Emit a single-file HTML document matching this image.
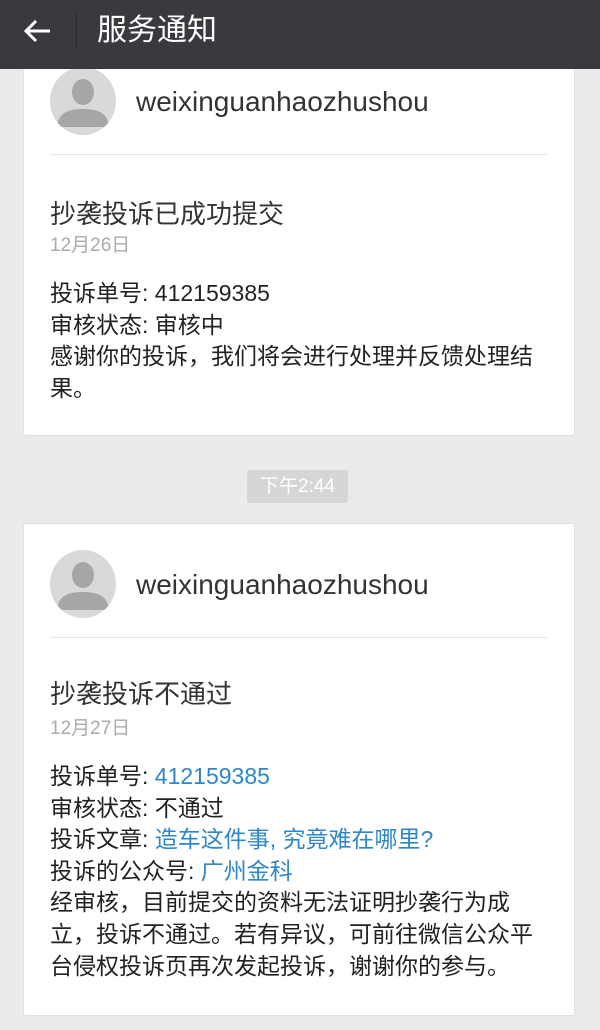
<!DOCTYPE html>
<html><head><meta charset="utf-8"><style>
*{margin:0;padding:0;box-sizing:border-box}
body{width:600px;height:1030px;background:#ebebeb;font-family:"Liberation Sans","Noto Sans CJK SC",sans-serif;position:relative;overflow:hidden;color:#222}
.hdr{position:absolute;left:0;top:0;width:600px;height:69px;background:#393a3e;z-index:5}
.hdr .t{position:absolute;left:97px;top:11px;font-size:30px;color:#fff;line-height:40px}
.hdr .sep{position:absolute;left:76px;top:12px;width:1px;height:38px;background:#2c2d30}
.card{position:absolute;left:23px;width:552px;background:#fff;border:1px solid #e0e0e0;border-radius:3px}
.av{position:absolute;left:26px;width:66px;height:68px;border-radius:50%;background:#d9d9d9;overflow:hidden}
.nm{position:absolute;left:112px;font-size:28px;color:#333;line-height:32px}
.dv{position:absolute;left:26px;width:497px;height:1px;background:#e6e6e6}
.ti{position:absolute;left:26px;font-size:26px;color:#333;line-height:32px}
.dt{position:absolute;left:26px;font-size:19px;color:#aaa;line-height:24px}
.bd{position:absolute;left:26px;font-size:23px;line-height:31.6px;color:#222;white-space:nowrap}
.bl{color:#2f86c8}
.pill{position:absolute;left:247px;top:470px;width:101px;height:33px;background:#d6d6d6;border-radius:3px;color:#fff;font-size:19px;text-align:center;line-height:33px}
</style></head><body>
<div class="hdr"><svg style="position:absolute;left:22px;top:18px" width="30" height="26" viewBox="0 0 30 26"><path d="M28 13H4M14 3L4 13l10 10" stroke="#fff" stroke-width="3" fill="none"/></svg><div class="sep"></div><div class="t">服务通知</div></div>

<div class="card" style="top:20px;height:416px">
<div class="av" style="top:46px"><svg width="66" height="68" viewBox="0 0 66 68"><ellipse cx="33" cy="25" rx="11" ry="13" fill="#a6a6a6"/><path d="M7 60C8 46 18 42 33 42s25 4 26 18z" fill="#a6a6a6"/></svg></div>
<div class="nm" style="top:65px">weixinguanhaozhushou</div>
<div class="dv" style="top:133px"></div>
<div class="ti" style="top:177px">抄袭投诉已成功提交</div>
<div class="dt" style="top:213px">12月26日</div>
<div class="bd" style="top:257px">投诉单号: 412159385<br>审核状态: 审核中<br>感谢你的投诉，我们将会进行处理并反馈处理结<br>果。</div>
</div>

<div class="pill">下午2:44</div>

<div class="card" style="top:523px;height:493px">
<div class="av" style="top:26px"><svg width="66" height="68" viewBox="0 0 66 68"><ellipse cx="33" cy="25" rx="11" ry="13" fill="#a6a6a6"/><path d="M7 60C8 46 18 42 33 42s25 4 26 18z" fill="#a6a6a6"/></svg></div>
<div class="nm" style="top:45px">weixinguanhaozhushou</div>
<div class="dv" style="top:113px"></div>
<div class="ti" style="top:154px">抄袭投诉不通过</div>
<div class="dt" style="top:193px">12月27日</div>
<div class="bd" style="top:237px">投诉单号: <span class="bl">412159385</span><br>审核状态: 不通过<br>投诉文章: <span class="bl">造车这件事, 究竟难在哪里?</span><br>投诉的公众号: <span class="bl">广州金科</span><br>经审核，目前提交的资料无法证明抄袭行为成<br>立，投诉不通过。若有异议，可前往微信公众平<br>台侵权投诉页再次发起投诉，谢谢你的参与。</div>
</div>
</body></html>
